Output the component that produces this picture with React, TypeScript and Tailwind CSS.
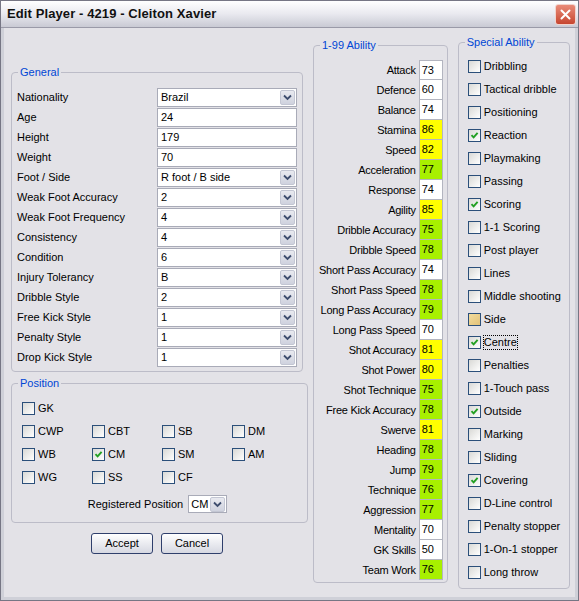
import React from "react";

const general: { label: string; value: string; combo: boolean }[] = [
  { label: "Nationality", value: "Brazil", combo: true },
  { label: "Age", value: "24", combo: false },
  { label: "Height", value: "179", combo: false },
  { label: "Weight", value: "70", combo: false },
  { label: "Foot / Side", value: "R foot / B side", combo: true },
  { label: "Weak Foot Accuracy", value: "2", combo: true },
  { label: "Weak Foot Frequency", value: "4", combo: true },
  { label: "Consistency", value: "4", combo: true },
  { label: "Condition", value: "6", combo: true },
  { label: "Injury Tolerancy", value: "B", combo: true },
  { label: "Dribble Style", value: "2", combo: true },
  { label: "Free Kick Style", value: "1", combo: true },
  { label: "Penalty Style", value: "1", combo: true },
  { label: "Drop Kick Style", value: "1", combo: true },
];

const abilities: [string, number][] = [
  ["Attack", 73],
  ["Defence", 60],
  ["Balance", 74],
  ["Stamina", 86],
  ["Speed", 82],
  ["Acceleration", 77],
  ["Response", 74],
  ["Agility", 85],
  ["Dribble Accuracy", 75],
  ["Dribble Speed", 78],
  ["Short Pass Accuracy", 74],
  ["Short Pass Speed", 78],
  ["Long Pass Accuracy", 79],
  ["Long Pass Speed", 70],
  ["Shot Accuracy", 81],
  ["Shot Power", 80],
  ["Shot Technique", 75],
  ["Free Kick Accuracy", 78],
  ["Swerve", 81],
  ["Heading", 78],
  ["Jump", 79],
  ["Technique", 76],
  ["Aggression", 77],
  ["Mentality", 70],
  ["GK Skills", 50],
  ["Team Work", 76],
];

const specials: { name: string; checked?: boolean; hover?: boolean; focus?: boolean }[] = [
  { name: "Dribbling" },
  { name: "Tactical dribble" },
  { name: "Positioning" },
  { name: "Reaction", checked: true },
  { name: "Playmaking" },
  { name: "Passing" },
  { name: "Scoring", checked: true },
  { name: "1-1 Scoring" },
  { name: "Post player" },
  { name: "Lines" },
  { name: "Middle shooting" },
  { name: "Side", hover: true },
  { name: "Centre", checked: true, focus: true },
  { name: "Penalties" },
  { name: "1-Touch pass" },
  { name: "Outside", checked: true },
  { name: "Marking" },
  { name: "Sliding" },
  { name: "Covering", checked: true },
  { name: "D-Line control" },
  { name: "Penalty stopper" },
  { name: "1-On-1 stopper" },
  { name: "Long throw" },
];

const positions: { name: string; checked?: boolean }[][] = [
  [{ name: "GK" }],
  [{ name: "CWP" }, { name: "CBT" }, { name: "SB" }, { name: "DM" }],
  [{ name: "WB" }, { name: "CM", checked: true }, { name: "SM" }, { name: "AM" }],
  [{ name: "WG" }, { name: "SS" }, { name: "CF" }],
];

function CheckMark() {
  return (
    <svg width="9" height="9" viewBox="0 0 9 9">
      <path d="M1.5 4.2 L3.6 6.4 L7.6 1.8" fill="none" stroke="#22a022" strokeWidth="1.9" />
    </svg>
  );
}

function Checkbox({ checked, hover }: { checked?: boolean; hover?: boolean }) {
  return (
    <span
      className={
        hover
          ? "w-[13px] h-[13px] shrink-0 border border-[#2b4f7a] bg-linear-to-br from-[#f3dc9c] to-[#e2c27a] flex items-center justify-center"
          : "w-[13px] h-[13px] shrink-0 border border-[#2b4f7a] bg-linear-to-br from-[#d9d9d6] to-white flex items-center justify-center"
      }
    >
      {checked && <CheckMark />}
    </span>
  );
}

function Chevron() {
  return (
    <svg width="9" height="7" viewBox="0 0 9 7">
      <path d="M1 1.5 L4.5 5 L8 1.5" fill="none" stroke="#3e4d6e" strokeWidth="1.8" />
    </svg>
  );
}

function ComboButton() {
  return (
    <span className="w-[15px] h-[15px] mr-px shrink-0 rounded-[2px] border border-[#c3c6d3] bg-linear-to-b from-[#e9eaf0] to-[#cfd2de] flex items-center justify-center">
      <Chevron />
    </span>
  );
}

function Legend({ children }: { children: React.ReactNode }) {
  return <legend className="ml-px px-[2px] leading-[13px] text-[#0046d5]">{children}</legend>;
}

export default function App() {
  return (
    <div className="w-[579px] h-[601px] flex flex-col border border-[#767684] bg-[#e3e2e7] text-[11px] text-black font-['Liberation_Sans',Arial,sans-serif] overflow-hidden">
      {/* title bar */}
      <div className="h-[27px] shrink-0 flex items-center justify-between pl-[6px] pr-[2px] bg-linear-to-b from-[#ffffff] via-[#e9e9ef] to-[#c9cad4] border-b border-[#9a9aa8]">
        <span className="text-[13px] font-bold text-[#111] tracking-[0.1px]">Edit Player - 4219 - Cleiton Xavier</span>
        <span className="w-[21px] h-[21px] rounded-[3px] border border-[#f2d3cc] bg-linear-to-b from-[#e98b78] to-[#c6452f] flex items-center justify-center">
          <svg width="11" height="11" viewBox="0 0 11 11">
            <path d="M1.5 1.5 L9.5 9.5 M9.5 1.5 L1.5 9.5" stroke="white" strokeWidth="2" strokeLinecap="round" />
          </svg>
        </span>
      </div>

      {/* body */}
      <div className="flex-1 flex items-start gap-[10px] pl-[7px] pr-[6px] border-x-[3px] border-b-[3px] border-[#cfd0d8]">
        {/* left column */}
        <div className="w-[292px] shrink-0 flex flex-col mt-[38px]">
          <fieldset className="border border-[#bcbcc8] rounded-[4px] px-[5px] pt-[9px] pb-[3px]">
            <Legend>General</Legend>
            {general.map((g) => (
              <div key={g.label} className="h-[20px] flex items-start">
                <span className="w-[140px] h-[19px] flex items-center">{g.label}</span>
                <span className="w-[140px] h-[19px] flex items-center justify-between border border-[#a9abb8] bg-white pl-[3px]">
                  <span>{g.value}</span>
                  {g.combo && <ComboButton />}
                </span>
              </div>
            ))}
          </fieldset>

          <fieldset className="mt-[5px] border border-[#bcbcc8] rounded-[4px] px-[5px] pt-[7px] pb-[9px]">
            <Legend>Position</Legend>
            <div className="ml-[5px] flex flex-col">
              {positions.map((row, i) => (
                <div key={i} className="h-[23px] flex items-center">
                  {row.map((p) => (
                    <div key={p.name} className="w-[70px] flex items-center gap-[3px]">
                      <Checkbox checked={p.checked} />
                      <span>{p.name}</span>
                    </div>
                  ))}
                </div>
              ))}
            </div>
            <div className="mt-[6px] flex items-center justify-center gap-[5px] pr-[4px]">
              <span>Registered Position</span>
              <span className="w-[39px] h-[18px] flex items-center justify-between border border-[#a9abb8] bg-white pl-[2px]">
                <span>CM</span>
                <ComboButton />
              </span>
            </div>
          </fieldset>

          <div className="mt-[10px] flex justify-center gap-[8px]">
            <button className="w-[62px] h-[21px] rounded-[3px] border border-[#2f3f6c] bg-linear-to-b from-white to-[#d6d8e2] text-[11px]">
              Accept
            </button>
            <button className="w-[62px] h-[21px] rounded-[3px] border border-[#2f3f6c] bg-linear-to-b from-white to-[#d6d8e2] text-[11px]">
              Cancel
            </button>
          </div>
        </div>

        {/* middle column */}
        <fieldset className="w-[134px] shrink-0 mt-[11px] border border-[#bcbcc8] rounded-[4px] pl-[5px] pr-[4px] pt-[8px] pb-[2px]">
          <Legend>1-99 Ability</Legend>
          {abilities.map(([name, v], i) => (
            <div key={name} className="h-[20px] flex items-center justify-end gap-[3px] tracking-[-0.25px]">
              <span className="whitespace-nowrap">{name}</span>
              <span
                className={
                  (v >= 80 ? "bg-[#ffff00] " : v >= 75 ? "bg-[#a8f000] " : "bg-white ") +
                  (i === 0 ? "border-t " : "") +
                  "w-[24px] h-[20px] shrink-0 flex items-center pl-[2px] border-x border-b border-[#b3b5c0] tracking-normal"
                }
              >
                {v}
              </span>
            </div>
          ))}
        </fieldset>

        {/* right column */}
        <fieldset className="w-[112px] shrink-0 mt-[8px] border border-[#bcbcc8] rounded-[4px] px-[5px] pt-[6px] pb-[4px]">
          <Legend>Special Ability</Legend>
          {specials.map((s) => (
            <div key={s.name} className="h-[23px] flex items-center gap-[3px] ml-[4px]">
              <Checkbox checked={s.checked} hover={s.hover} />
              <span
                className={
                  s.focus
                    ? "whitespace-nowrap leading-[13px] outline outline-1 outline-dotted outline-black"
                    : "whitespace-nowrap leading-[13px]"
                }
              >
                {s.name}
              </span>
            </div>
          ))}
        </fieldset>
      </div>
    </div>
  );
}
